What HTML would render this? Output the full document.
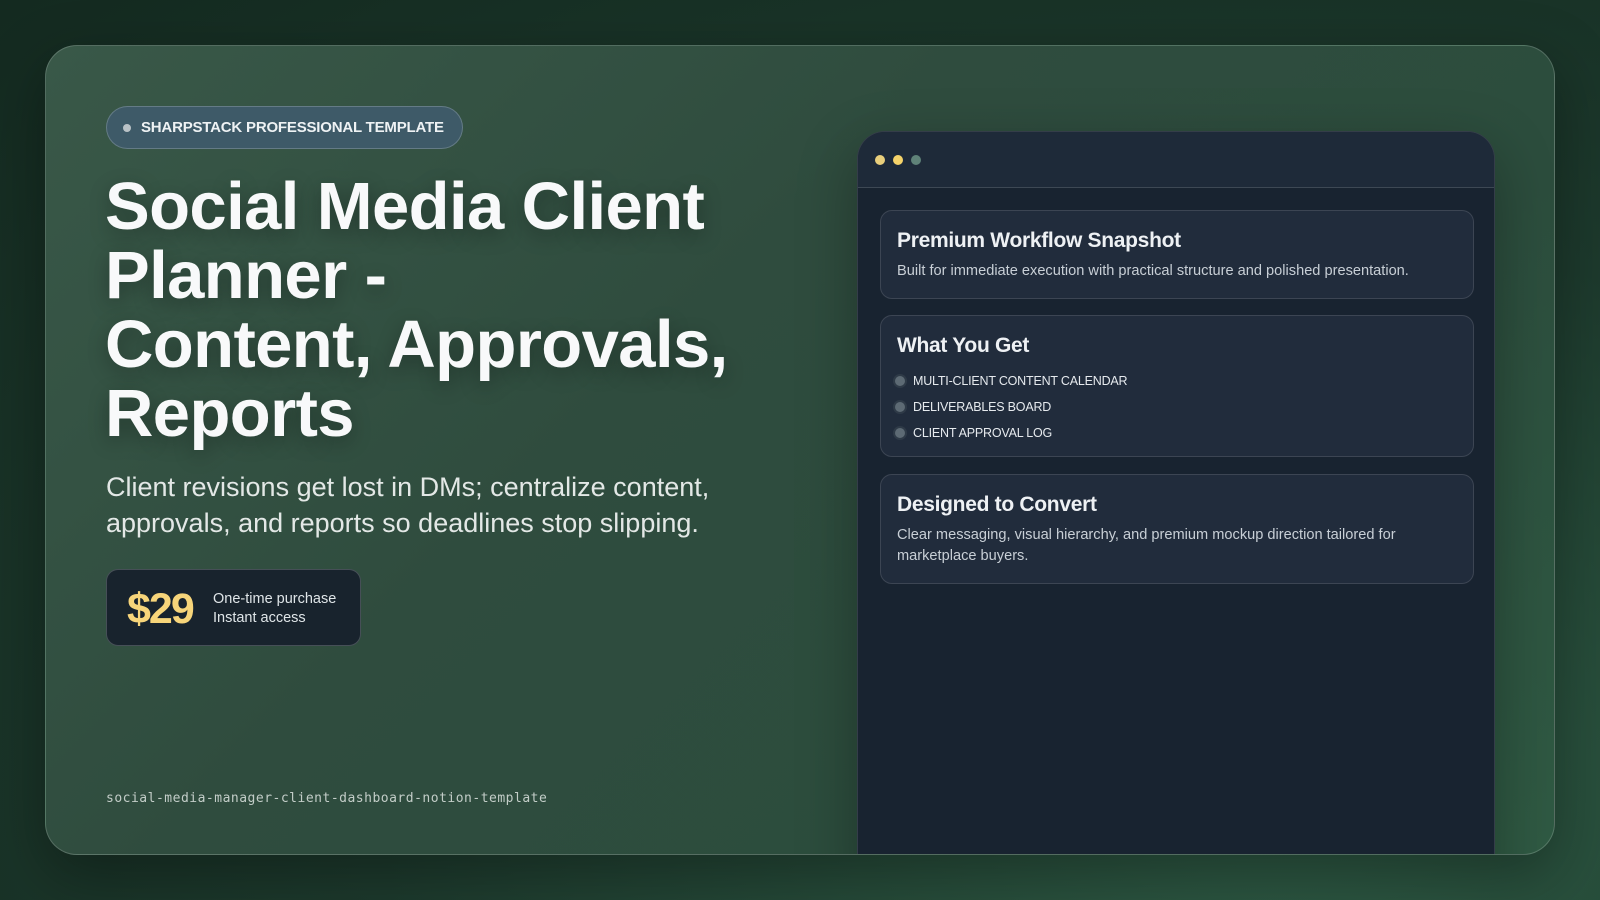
<!DOCTYPE html>
<html><head><meta charset="utf-8"><style>
*{box-sizing:border-box;margin:0;padding:0}
body{width:1600px;height:900px;overflow:hidden;background:radial-gradient(ellipse at 80% 90%,#2e5a44 0%,#1d3a2d 50%,#142a20 100%);font-family:"Liberation Sans",sans-serif;position:relative}
.card{position:absolute;left:45px;top:45px;width:1510px;height:810px;border-radius:32px;background:linear-gradient(135deg,#395848 0%,#2f4c3e 40%,#2c4d3d 70%,#2f5a43 100%);border:1px solid rgba(255,255,255,0.18);box-shadow:0 20px 60px rgba(0,0,0,0.35);overflow:hidden}
.badge{position:absolute;left:60px;top:60px;width:357px;height:43px;border-radius:22px;background:#3e5a68;border:1px solid rgba(255,255,255,0.2);color:#eef2f4;font-weight:bold;font-size:15px;line-height:41px;padding-left:34px;letter-spacing:-0.2px}
.badge:before{content:"";position:absolute;left:16px;top:17px;width:8px;height:8px;border-radius:50%;background:#b9c2c6}
h1{position:absolute;left:59px;top:126px;font-size:67px;line-height:69px;font-weight:bold;color:#f8f9fa;letter-spacing:-0.6px;text-shadow:0 6px 20px rgba(0,0,0,0.3)}
.sub{position:absolute;left:60px;top:423px;width:680px;font-size:27px;line-height:36px;color:#e3e8e6;letter-spacing:0}
.price{position:absolute;left:60px;top:523px;width:255px;height:77px;border-radius:12px;background:#18232d;border:1px solid rgba(255,255,255,0.2)}
.price b{position:absolute;left:20px;top:15px;font-size:43px;color:#f7d57a;letter-spacing:-2px}
.price span{position:absolute;left:106px;top:20px;font-size:14.5px;line-height:19px;color:#dfe5e8}
.foot{position:absolute;left:60px;top:745px;font-family:"DejaVu Sans Mono","Liberation Mono",monospace;font-size:13px;color:#c3cdc8;letter-spacing:0.5px}
.win{position:absolute;left:811px;top:85px;width:638px;height:760px;border-radius:28px 28px 0 0;background:#182330;border:1px solid rgba(255,255,255,0.12);box-shadow:0 20px 60px rgba(0,0,0,0.3);overflow:hidden}
.bar{height:56px;background:#1e2a39;border-bottom:1px solid rgba(255,255,255,0.14);position:relative}
.dot{position:absolute;top:23px;width:10px;height:10px;border-radius:50%}
.box{position:absolute;left:22px;width:594px;border-radius:12px;background:#212c3c;border:1px solid rgba(255,255,255,0.12);padding:0 16px;color:#eef1f4}
.box h3{font-size:21px;letter-spacing:-0.3px;margin-top:18px}
.box p{font-size:14.6px;line-height:21px;color:#c8cfd6;margin-top:8px;letter-spacing:0}
.li{font-size:12.5px;color:#e6eaee;position:relative;padding-left:16px;height:26px;line-height:26px;letter-spacing:-0.2px}
.li:before{content:"";position:absolute;left:-2px;top:8px;width:10px;height:10px;border-radius:50%;background:#5d6a74;box-shadow:0 0 0 2px #2e3a47}
</style></head><body>
<div class="card">
<div class="badge">SHARPSTACK PROFESSIONAL TEMPLATE</div>
<h1>Social Media Client<br>Planner -<br>Content, Approvals,<br>Reports</h1>
<div class="sub">Client revisions get lost in DMs; centralize content, approvals, and reports so deadlines stop slipping.</div>
<div class="price"><b>$29</b><span>One-time purchase<br>Instant access</span></div>
<div class="foot">social-media-manager-client-dashboard-notion-template</div>
<div class="win">
<div class="bar"><div class="dot" style="left:17px;background:#e9cf7c"></div><div class="dot" style="left:35px;background:#f5d36a"></div><div class="dot" style="left:53px;background:#5f8278"></div></div>
<div class="box" style="top:78px;height:89px"><h3>Premium Workflow Snapshot</h3><p>Built for immediate execution with practical structure and polished presentation.</p></div>
<div class="box" style="top:183px;height:142px"><h3>What You Get</h3><div style="margin-top:10px"><div class="li">MULTI-CLIENT CONTENT CALENDAR</div><div class="li">DELIVERABLES BOARD</div><div class="li">CLIENT APPROVAL LOG</div></div></div>
<div class="box" style="top:342px;height:110px"><h3>Designed to Convert</h3><p>Clear messaging, visual hierarchy, and premium mockup direction tailored for<br>marketplace buyers.</p></div>
</div>
</div>
</body></html>
